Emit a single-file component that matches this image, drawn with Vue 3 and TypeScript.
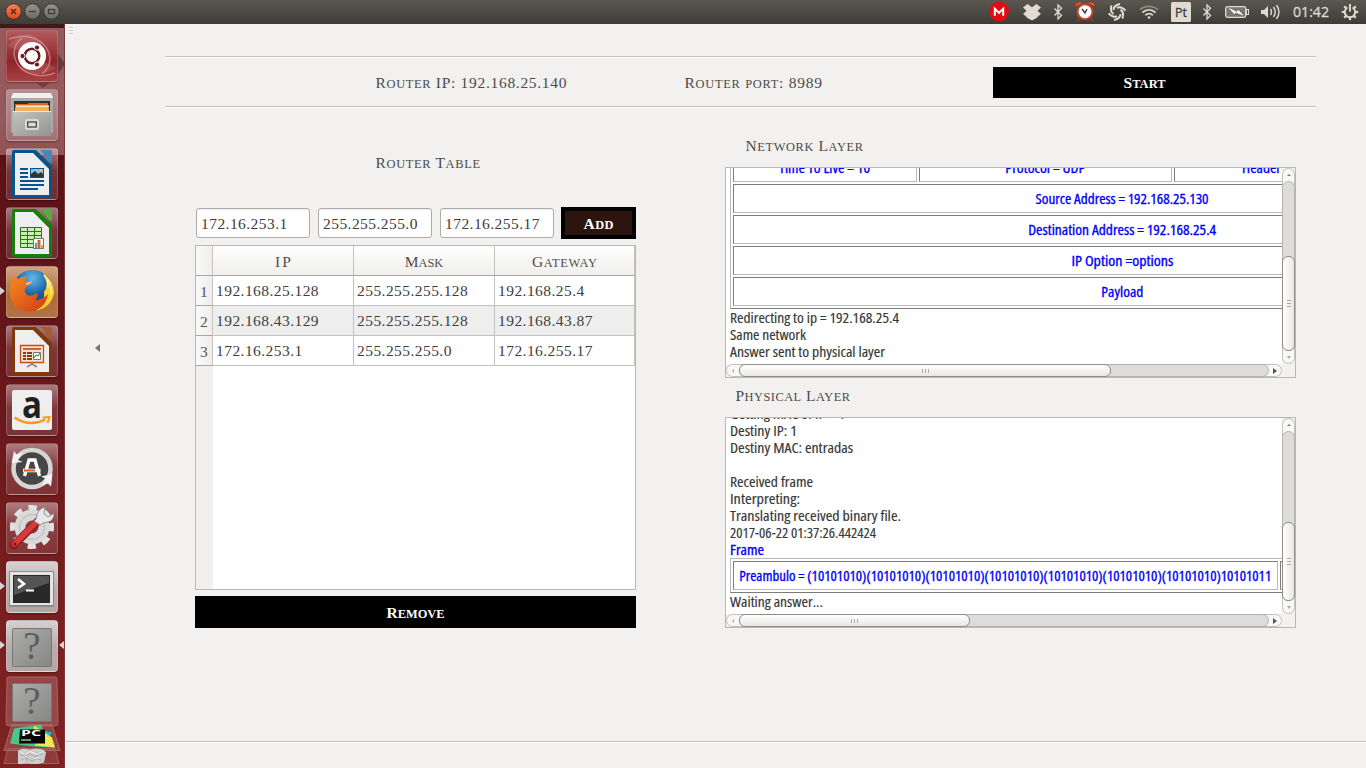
<script setup lang="ts">
import { h, ref } from 'vue'

interface Route { ip: string; mask: string; gateway: string }

const routes = ref<Route[]>([
  { ip: '192.168.25.128', mask: '255.255.255.128', gateway: '192.168.25.4' },
  { ip: '192.168.43.129', mask: '255.255.255.128', gateway: '192.168.43.87' },
  { ip: '172.16.253.1', mask: '255.255.255.0', gateway: '172.16.255.17' },
])
const draft = ref<Route>({ ip: '172.16.253.1', mask: '255.255.255.0', gateway: '172.16.255.17' })

function addRoute() {
  routes.value.push({ ...draft.value })
}
function removeRoute() {
  routes.value.pop()
}

type Line = [text: string, width: number]
const packetRows: Line[] = [
  ['Source Address = 192.168.25.130', 173],
  ['Destination Address = 192.168.25.4', 188],
  ['IP Option =options', 102],
  ['Payload', 42],
]
const networkLog: Line[] = [
  ['Redirecting to ip = 192.168.25.4', 169],
  ['Same network', 76],
  ['Answer sent to physical layer', 155],
]
const physicalLog: Line[] = [
  ['Getting MAC of IP = 1', 115],
  ['Destiny IP: 1', 67],
  ['Destiny MAC: entradas', 123],
  ['', 0],
  ['Received frame', 83],
  ['Interpreting:', 70],
  ['Translating received binary file.', 171],
  ['2017-06-22 01:37:26.442424', 146],
]

// Sets lowercase runs as large small capitals.
const Caps = (props: { text: string }) =>
  h('span', { class: 'caps' }, props.text.split(/([a-z]+)/).filter(Boolean).map((run) =>
    /^[a-z]/.test(run) ? h('small', run) : run))
Caps.props = ['text']

// Condenses a run of text to the given width in pixels.
const vCondense = {
  mounted(el: HTMLElement, binding: { value: number }) {
    const w = el.getBoundingClientRect().width
    if (w > 0 && binding.value > 0) el.style.transform = `scaleX(${binding.value / w})`
  },
}
// Tracks a run of text out to the given width in pixels.
const vTrack = {
  mounted(el: HTMLElement, binding: { value: number }) {
    const w = el.getBoundingClientRect().width
    const n = (el.textContent ?? '').length
    if (n > 1) {
      el.style.letterSpacing = `${(binding.value - w) / (n - 1)}px`
      el.style.marginRight = `${-(binding.value - w) / (n - 1)}px`
    }
  },
}
</script>

<template>
  <div class="screen">
    <header class="topbar">
      <svg width="66" height="24" viewBox="0 0 66 24">
        <defs>
          <linearGradient id="wc" x1="0" y1="0" x2="0" y2="1"><stop offset="0" stop-color="#fb8157" /><stop offset="1" stop-color="#dc4a1c" /></linearGradient>
          <linearGradient id="wg" x1="0" y1="0" x2="0" y2="1"><stop offset="0" stop-color="#96948b" /><stop offset="1" stop-color="#6b6963" /></linearGradient>
        </defs>
        <circle cx="13.500" cy="11.500" r="7.800" fill="url(#wc)" stroke="#34332e" />
        <circle cx="32.500" cy="11.500" r="7.800" fill="url(#wg)" stroke="#34332e" />
        <circle cx="51.500" cy="11.500" r="7.800" fill="url(#wg)" stroke="#34332e" />
        <path d="M11 9l5 5M16 9l-5 5" stroke="#5a2a17" stroke-width="1.500" />
        <path d="M29 11.500h7" stroke="#3c3b36" stroke-width="1.300" />
        <rect x="48.500" y="9.500" width="6" height="4" fill="none" stroke="#3c3b36" stroke-width="1.300" />
      </svg>
      <svg class="tray" width="396" height="24" viewBox="0 0 396 24">
        <circle cx="29" cy="11.600" r="10" fill="#e30b12" />
        <path d="M24.800 15.700V8.800l4.200 4 4.200-4v6.900" fill="none" stroke="#fff" stroke-width="2" />
        <path d="M57.500 4l4.500 3.200 4.500-3.200 4.500 3.500-3.500 3.300 3.500 3.300-3.500 2.700v.7l-5.500 3-5.500-3v-.7l-3.500-2.700 3.500-3.300-3.500-3.300z" fill="#dfdbd2" />
        <g fill="none" stroke="#dfdbd2" stroke-width="1.300">
          <path d="M84.500 8.500l7 7-3.500 3.500v-14l3.500 3.200-7 7.300" />
          <path d="M233.500 8.500l7 7-3.500 3.500v-14l3.500 3.200-7 7.300" />
        </g>
        <path d="M107 21l3-4M123 21l-3-4" stroke="#8c3520" stroke-width="3" />
        <path d="M105 7c-1-4 4-7 8-4zM125 7c1-4-4-7-8-4z" fill="#d8584a" stroke="#762f22" stroke-width=".7" />
        <circle cx="115" cy="11.700" r="7.500" fill="#fff" stroke="#bd462e" stroke-width="2" />
        <path d="M112 9l3 4 2-4" fill="none" stroke="#333" stroke-width="1.400" />
        <g fill="none" stroke="#dfdbd2" stroke-width="2">
          <path v-for="a in 6" :key="a" d="M143.500 10q0-4.500 6.500-6" :transform="`rotate(${a * 60} 147 12)`" />
        </g>
        <g fill="none" stroke="#dfdbd2" stroke-width="1.800">
          <path d="M170 9.700c5-4.500 13-4.500 18 0" stroke="#8f8c84" />
          <path d="M172.500 12.500c4-3.500 9-3.500 13 0" />
          <path d="M175.300 15.300c2.500-2.200 5-2.200 7.500 0" />
        </g>
        <circle cx="179" cy="17.500" r="1.300" fill="#dfdbd2" />
        <rect x="201" y="2" width="20" height="20" rx="1.500" fill="#dfdbd2" />
        <text x="205" y="17" font-size="13.500" fill="#3c3b37" stroke="#3c3b37" stroke-width=".3" textLength="12" lengthAdjust="spacingAndGlyphs">Pt</text>
        <rect x="255.700" y="6.700" width="20" height="10.600" rx="1.500" fill="#77756e" stroke="#dfdbd2" stroke-width="1.300" />
        <rect x="276.500" y="9.500" width="2" height="5" fill="none" stroke="#dfdbd2" />
        <path d="M259.500 8.500l8 4 .5-2.500 5 5-8-3-.5 2z" fill="#fff" stroke="#fff" stroke-width=".6" />
        <path d="M291 10h3l4-4v12l-4-4h-3z" fill="#dfdbd2" />
        <path d="M300.500 9q2 3 0 6M303.500 7q3.500 5 0 10M306.500 5q5 7 0 14" fill="none" stroke="#dfdbd2" stroke-width="1.400" />
        <text x="323" y="17" font-size="14.500" fill="#dfdbd2" stroke="#dfdbd2" stroke-width=".3" textLength="36" lengthAdjust="spacingAndGlyphs">01:42</text>
        <g fill="none" stroke="#dfdbd2">
          <path d="M377.500 7.500a5.200 5.200 0 1 0 5 0M380 4v7.500" stroke-width="1.900" />
          <path v-for="a in [45, 90, 135, 180, 225, 270, 315]" :key="a" d="M380 6.500v-2.700" stroke-width="2.200" :transform="`rotate(${a} 380 12)`" />
        </g>
      </svg>
    </header>

    <div class="desktop">
      <nav class="launcher">
        <div class="tile dash">
          <svg viewBox="0 0 52 52">
            <path d="M2 16Q20-6 37 13L26 26zM50 38Q28 50 13 39L26 26z" fill="#e2aaaa" opacity=".2" />
            <g fill="none" stroke="#eab9b9" opacity=".5" stroke-width="1.500">
              <path d="M3 9C22 2 42 10 44 28Q44 38 36 44M49 43C30 50 10 42 8 24Q8 14 16 8" />
            </g>
            <circle cx="26" cy="26" r="14" fill="#fff" />
            <circle cx="26" cy="26" r="7.300" fill="none" stroke="#681a1d" stroke-width="2.500" />
            <g fill="#681a1d" stroke="#fff" stroke-width="1"><circle cx="16.500" cy="26" r="2.600" /><circle cx="31" cy="17.500" r="2.600" /><circle cx="31" cy="34.500" r="2.600" /></g>
          </svg>
          <i class="dash-arrow"></i><i class="dash-notch"></i>
        </div>
        <div class="tile pale">
          <svg viewBox="0 0 52 52">
            <defs><linearGradient id="cab" x1="0" y1="0" x2="1" y2="1"><stop offset="0" stop-color="#c4c4c2" /><stop offset="1" stop-color="#939391" /></linearGradient></defs>
            <path d="M5 9l2-5h38l2 5v35H5z" fill="#aaa" /><path d="M7 4h38l2 5H5z" fill="#efefed" />
            <rect x="8" y="12" width="36" height="12" fill="#303030" />
            <path d="M9 22v-7h12l2-1h19v8z" fill="#db6c20" /><rect x="10" y="16.500" width="33" height="2" fill="#fff1d0" /><rect x="9" y="19" width="34" height="3" fill="#f5ae59" />
            <path d="M7 22h38v25H7z" fill="url(#cab)" /><path d="M7 22.500h38" stroke="#eee" />
            <rect x="19" y="30" width="14" height="11" rx="2" fill="#d8d8d6" /><rect x="21.700" y="33" width="8.600" height="5" fill="#ddd" stroke="#444" stroke-width="1.300" />
          </svg>
        </div>
        <div class="tile">
          <svg viewBox="0 0 52 52">
            <path d="M8 2h22l16 16v30q0 2-2 2H8q-2 0-2-2V4q0-2 2-2z" fill="#07548c" /><path d="M9 5h18l16 16v26H9z" fill="#eee" /><path d="M34 2h10q2 0 2 2v11q-4 0-6-5t-6-8z" fill="#4389ba" />
            <g fill="#07548c"><rect x="14" y="20" width="8" height="2" /><rect x="14" y="24" width="8" height="2" /><rect x="14" y="28" width="8" height="2" /><rect x="14" y="32" width="24" height="2" /><rect x="14" y="36" width="24" height="2" /><rect x="14" y="40" width="18" height="2" /></g>
            <rect x="24.500" y="20.500" width="13" height="9" fill="#81c3ee" stroke="#07548c" /><path d="M25 29v-3l4-3 3 3 3-2 2 2v3z" fill="#333" /><circle cx="35" cy="22.500" r="1.500" fill="#f5cd35" />
          </svg>
        </div>
        <div class="tile">
          <svg viewBox="0 0 52 52">
            <path d="M8 2h22l16 16v30q0 2-2 2H8q-2 0-2-2V4q0-2 2-2z" fill="#187e0d" /><path d="M9 5h18l16 16v26H9z" fill="#eee" /><path d="M34 2h10q2 0 2 2v10q-4 0-6-5t-6-7z" fill="#53ac3e" />
            <path d="M14.500 20.500h21v20h-21z" fill="#c7f0b7" /><path d="M14.500 20.500h21v20h-21zM21.500 20v20M28.500 20v20M14 24.500h22M14 28.500h22M14 32.500h22M14 36.500h22" fill="none" stroke="#187e0d" />
            <rect x="27.500" y="31.500" width="10" height="10" fill="#fff" stroke="#777" /><path d="M29 36h2v5h-2z" fill="#3ea4d9" /><path d="M31.500 33h3v8h-3z" fill="#d46522" /><path d="M35 38h2v3h-2z" fill="#efa415" />
          </svg>
        </div>
        <div class="tile firefox">
          <svg viewBox="0 0 52 52">
            <defs><radialGradient id="glb" cx=".5" cy=".2" r=".8"><stop offset="0" stop-color="#62bae4" /><stop offset=".5" stop-color="#1c62a4" /><stop offset="1" stop-color="#123773" /></radialGradient>
              <linearGradient id="fox" x1="0" y1="0" x2="1" y2="1"><stop offset="0" stop-color="#f58b22" /><stop offset="1" stop-color="#d33b12" /></linearGradient></defs>
            <circle cx="26.500" cy="24.500" r="20.500" fill="url(#glb)" />
            <path d="M37 7q11 8 11 20Q45 42 29 45q11-8 9-19Q44 18 37 7z" fill="#f8d12e" />
            <path d="M38 9q5 7 4 13M42 13q4 7 3 15" stroke="#fff19a" stroke-width="1.500" fill="none" />
            <path d="M8 9l4 4q4-3 9-2l-2 5h6q0 3-5 5-3 4 1 8 5 2 10-2 2 3-2 7 8 0 13-6-1 9-8 14-9 6-19 2Q4 39 4 26 4 17 8 9z" fill="url(#fox)" />
            <path d="M20 17l6-2q0 3-6 4z" fill="#e9b8a2" />
          </svg>
        </div>
        <div class="tile">
          <svg viewBox="0 0 52 52">
            <path d="M8 2h22l16 16v30q0 2-2 2H8q-2 0-2-2V4q0-2 2-2z" fill="#81380c" /><path d="M9 5h18l16 16v26H9z" fill="#eee" /><path d="M34 2h10q2 0 2 2v10q-4 0-6-5t-6-7z" fill="#a65b31" />
            <path d="M14.500 20.500h23v17h-23z" fill="#f7e3d5" stroke="#c44f14" stroke-width="1.300" /><path d="M17 24h18" stroke="#d2642b" stroke-width="2" /><path d="M17 28h3M17 31h3M17 34h3M21 28h5M21 31h5M21 34h5" stroke="#8b3a0d" stroke-width="2" /><path d="M27.500 27.500h7v7h-7z" fill="#fff" stroke="#777" /><path d="M28 33l2-3 2 1 2-3" stroke="#188a20" fill="none" /><path d="M26 38v2M26 39l-5 3M26 39l5 3" stroke="#888" stroke-width="1.500" />
          </svg>
        </div>
        <div class="tile">
          <svg viewBox="0 0 52 52">
            <rect x="6" y="6" width="40" height="40" rx="2" fill="#eee" />
            <text class="amazon" x="16" y="34" font-size="37" font-weight="700" textLength="20" lengthAdjust="spacingAndGlyphs">a</text>
            <path d="M8.500 33.500q15 10 31 2" fill="none" stroke="#f79918" stroke-width="2.500" /><path d="M36.500 33.500l7-.5-2 6" fill="none" stroke="#f79918" stroke-width="2" />
          </svg>
        </div>
        <div class="tile">
          <svg viewBox="0 0 52 52">
            <circle cx="26" cy="25.500" r="18.500" fill="#464646" stroke="#d5d5d5" stroke-width="4.500" />
            <path d="M5.500 20L8 8l2.500 3.500 5.500-1.500-4 7 5 2z" fill="#f2f2f2" /><path d="M46.500 31l-1.500 12.500-3-3-6 2 3.500-7-4.500-2z" fill="#f2f2f2" />
            <path d="M18.500 33L23 17h6l4.500 16M17 27.500h17.500" fill="none" stroke="#fff" stroke-width="3.300" /><path d="M18 27.500h11" stroke="#e9531b" stroke-width="2" />
          </svg>
        </div>
        <div class="tile">
          <svg viewBox="0 0 52 52">
            <circle cx="26" cy="25" r="19" fill="none" stroke="#e2e2e2" stroke-width="6" stroke-dasharray="8 6.923" transform="rotate(-12 26 25)" />
            <circle cx="26" cy="25" r="12" fill="none" stroke="#d9d9d9" stroke-width="11" />
            <circle cx="26" cy="25" r="12.500" fill="none" stroke="#b9b9b9" />
            <path d="M8 43l23-23" stroke="#8f1515" stroke-width="8" stroke-linecap="round" /><path d="M8.500 42L30 20.500" stroke="#d53b3b" stroke-width="6" stroke-linecap="round" />
            <path d="M28 19q3-2 3-6 1-6 8-8l-1 7 4 3 6-4q0 8-6 9-5 0-8 3z" fill="#e8e8e8" stroke="#777" stroke-width=".7" /><circle cx="9" cy="42" r="1.500" fill="#6b1111" />
          </svg>
        </div>
        <div class="tile light">
          <svg viewBox="0 0 52 52">
            <rect x="3" y="10" width="45" height="36" rx="1" fill="#8a8a89" /><rect x="4" y="11" width="43" height="33" fill="#e4e4e3" /><rect x="7" y="14" width="37" height="28" fill="#292929" /><path d="M8 15h35v7L8 34z" fill="#545454" />
            <path d="M12 18l6 5-6 4" fill="none" stroke="#fff" stroke-width="2.500" /><path d="M20 29.500h8" stroke="#fff" stroke-width="2" />
          </svg>
        </div>
        <div class="tile light">
          <svg viewBox="0 0 52 52">
            <defs><linearGradient id="unk" x1="0" y1="0" x2="1" y2="1"><stop offset="0" stop-color="#adadac" /><stop offset="1" stop-color="#868685" /></linearGradient></defs>
            <rect x="6.500" y="8.500" width="39" height="38" rx="1" fill="url(#unk)" stroke="#777" /><text class="question" x="26" y="39" font-size="39" text-anchor="middle">?</text>
          </svg>
          <i class="focus"></i>
        </div>
        <svg class="stack" width="65" height="91" viewBox="0 0 65 91">
          <path d="M7 5q0-1 2-1h46q2 0 2 2l1 44q0 3-3 3H9q-3 0-3-3z" fill="#c29191" fill-opacity=".35" stroke="#b77676" stroke-opacity=".7" />
          <rect x="12.500" y="10.500" width="39" height="38" rx="1" fill="url(#unk)" stroke="#777" /><text class="question" x="32" y="41" font-size="39" text-anchor="middle">?</text>
          <g transform="translate(0 1.500)">
            <path d="M12 50h40l8 26H4z" fill="#b77777" fill-opacity=".4" stroke="#ac6565" />
            <path d="M14 54l27-4 3 7 6 7 5 9-21-1-24-3z" fill="#45c98a" /><path d="M42 56l10 2-3 5z" fill="#18b8d7" /><path d="M34 51l18 12 3 10-20-2z" fill="#eee94c" />
            <path d="M20 55h25v14H19z" fill="#050505" /><text class="pc" x="21" y="61.500" font-size="8" textLength="20" lengthAdjust="spacingAndGlyphs">PC</text><path d="M21 65.500h10" stroke="#fff" />
            <path d="M8 74h47l4 15H4z" fill="#b77777" fill-opacity=".3" stroke="#a65d5d" />
            <path d="M18 76l5-2 7 1 6-1 7 1 3 3-2 10-8 2-9-1-9 1z" fill="#cdcdcb" /><path d="M20 80l5 2 5-3 5 3 8-3M21 85l6-2 4 4 6-3 5 2M24 78l3 9M38 78l-5 9" fill="none" stroke="#a8a8a6" /><path d="M20 77l5 3 5-3 7 3 6-3M23 83l4-1M34 84l5-1" fill="none" stroke="#f0f0ee" />
          </g>
        </svg>
        <i class="run r1"></i><i class="run r2"></i><i class="run r3"></i>
      </nav>

      <main class="window">
        <div class="side">
          <div class="grip"><i></i><i></i><i></i></div>
          <i class="collapse"></i>
        </div>
        <div class="content">
          <section class="status">
            <div class="label router-ip"><Caps v-track="191" text="Router IP: 192.168.25.140" /></div>
            <div class="label router-port"><Caps v-track="137.5" text="Router port: 8989" /></div>
            <button class="btn start"><Caps v-track="42" text="Start" /></button>
          </section>
          <div class="columns">
            <section class="routing">
              <h2 class="label table-title"><Caps v-track="104.5" text="Router Table" /></h2>
              <div class="form">
                <input v-model="draft.ip"><input v-model="draft.mask"><input v-model="draft.gateway">
                <button class="btn add" @click="addRoute"><Caps v-track="30" text="Add" /></button>
              </div>
              <div class="grid">
                <div class="row head"><b></b><span><Caps v-track="16" text="IP" /></span><span><Caps v-track="38.5" text="Mask" /></span><span><Caps v-track="65" text="Gateway" /></span></div>
                <div v-for="(r, i) in routes" :key="i" class="row" :class="{ alt: i % 2 === 1 }">
                  <b>{{ i + 1 }}</b><span>{{ r.ip }}</span><span>{{ r.mask }}</span><span>{{ r.gateway }}</span>
                </div>
                <div class="rest"></div>
              </div>
              <button class="btn remove" @click="removeRoute"><Caps v-track="58" text="Remove" /></button>
            </section>

            <section class="layers">
              <h2 class="label net-title"><Caps v-track="117.5" text="Network Layer" /></h2>
              <div class="pane">
                <div class="view">
                  <div class="packet">
                    <div class="fields">
                      <div class="cell ttl"><span v-condense="91">Time To Live = 10</span></div>
                      <div class="cell proto"><span v-condense="80">Protocol = UDP</span></div>
                      <div class="cell hdr"><span class="from-left" v-condense="39">Header</span></div>
                    </div>
                    <div v-for="[t, w] in packetRows" :key="t" class="cell"><span v-condense="w">{{ t }}</span></div>
                  </div>
                  <p v-for="[t, w] in networkLog" :key="t"><span v-condense="w">{{ t }}</span></p>
                </div>
                <div class="vbar"><i class="up"></i><div class="trough"><div class="thumb net"><u></u><u></u><u></u></div></div><i class="down"></i></div>
                <div class="hbar"><i class="left"></i><div class="trough"><div class="thumb net"><u></u><u></u><u></u></div></div><i class="right"></i></div>
              </div>
              <h2 class="label phy-title"><Caps v-track="114.5" text="Physical Layer" /></h2>
              <div class="pane">
                <div class="view">
                  <p v-for="([t, w], i) in physicalLog" :key="i"><span v-condense="w">{{ t }}</span></p>
                  <p class="frame"><span v-condense="34">Frame</span></p>
                  <div class="packet strip">
                    <div class="cell preamble"><span v-condense="532">Preambulo = (10101010)(10101010)(10101010)(10101010)(10101010)(10101010)(10101010)10101011</span></div>
                    <div class="cell next"></div>
                  </div>
                  <p><span v-condense="93">Waiting answer...</span></p>
                </div>
                <div class="vbar"><i class="up"></i><div class="trough"><div class="thumb phy"><u></u><u></u><u></u></div></div><i class="down"></i></div>
                <div class="hbar"><i class="left"></i><div class="trough"><div class="thumb phy"><u></u><u></u><u></u></div></div><i class="right"></i></div>
              </div>
            </section>
          </div>
        </div>
      </main>
    </div>
  </div>
</template>

<style>
body { margin: 0; overflow: hidden; }
.caps { display: inline-block; }
.caps small { font-size: 12.4px; text-transform: uppercase; }
</style>

<style scoped>
* { box-sizing: border-box; }
.screen { width: 1366px; height: 768px; display: flex; flex-direction: column; background: #f2f1ef; overflow: hidden; font-family: "Open Sans", "Noto Sans", sans-serif; }
.topbar { height: 24px; flex: none; display: flex; justify-content: space-between; background: linear-gradient(#5a584e, #3d3c38); }
.desktop { flex: 1; display: flex; min-height: 0; }

.launcher { position: relative; width: 65px; flex: none; padding: 6px 0 0; display: flex; flex-direction: column; gap: 7px; border-right: 1px solid #7d3a3d; background: linear-gradient(#40191b 0 4px, #965a5d 4px 100px, #8f5154 131px, #5b1217 131px, #6b181c 400px, #7b2020 600px, #7d2121); }
.tile { position: relative; flex: none; width: 52px; height: 52px; margin-left: 6px; border-radius: 4px; border: 1px solid #ffffff30; background: linear-gradient(#ffffff70, #ffffff26 45%, #ffffff1c); box-shadow: 0 1px 2px #0005; }
.tile svg { display: block; width: 52px; height: 52px; margin: -1px; }
.dash { background: linear-gradient(#b35a5c, #8f2428 60%, #a84043); }
.firefox { background: linear-gradient(#cfa183, #b06a3b 60%, #b27245); }
.light { background: linear-gradient(#d6d1d1, #b9aeae 50%, #b5a5a5); }
.pale { background: linear-gradient(#ffffff50, #ffffff28); }
.dash-arrow, .dash-notch, .focus, .run { position: absolute; width: 0; height: 0; }
.dash-arrow { left: 51px; top: 23px; border: 10px solid transparent; border-left: 7px solid #683a3d; border-right: 0; }
.dash-notch { left: 28px; top: 51px; border: 8px solid transparent; border-top: 6px solid #6d3f41; border-bottom: 0; }
.focus { left: 52px; top: 20px; border: 4px solid transparent; border-right: 5px solid #d9d3d3; border-left: 0; }
.run { left: 0; border: 4px solid transparent; border-left: 5px solid #d9d3d3; border-right: 0; }
.r1 { top: 263px; } .r2 { top: 558px; } .r3 { top: 617px; }
.stack { flex: none; margin-top: -6px; }
.amazon { fill: #202020; font-family: "Open Sans", sans-serif; }
.question { fill: #5e5e5d; font-family: "Liberation Serif", serif; }
.pc { fill: #fff; font-weight: 700; }

.window { flex: 1; display: flex; background: linear-gradient(#c3c2bf, #c3c2bf) 0 717px / 100% 1px no-repeat, linear-gradient(#fff, #fff) 0 718px / 100% 1px no-repeat, #f2f1ef; }
.side { width: 100px; padding: 3px 0 0 4px; display: flex; flex-direction: column; }
.grip { height: 8px; display: flex; flex-direction: column; gap: 2px; }
.grip i { width: 4px; height: 1px; background: #c7c6c3; box-shadow: 0 1px #fff; }
.collapse { margin: 309px 0 0 26px; width: 0; height: 0; border: 4px solid transparent; border-right: 5px solid #747474; border-left: 0; }
.content { width: 1151px; padding-top: 32px; }
.label, .btn, .grid, input { font-family: "Liberation Serif", "Times New Roman", serif; font-size: 15.5px; color: #4a4a4a; font-weight: 400; white-space: nowrap; }
.label { margin: 0; height: 20px; line-height: 20px; }
.status { height: 51px; padding-top: 1px; display: flex; align-items: center; border-top: 1px solid #c3c2bf; border-bottom: 1px solid #c3c2bf; box-shadow: 0 1px #fff, inset 0 1px #fff; }
.status .label { margin-top: 2px; }
.router-ip { width: 309px; margin-left: 210.5px; }
.router-port { width: 308.5px; }
.btn { background: #000; border: 0; padding: 1px 0 0; color: #fff; font-weight: 700; display: flex; align-items: center; justify-content: center; }
.start { width: 303px; height: 31px; margin-top: 1px; }
.columns { display: flex; padding-left: 30px; gap: 89px; }
.routing { width: 441px; padding-top: 46px; }
.table-title { margin-left: 180.5px; }
.form { display: flex; align-items: center; height: 32px; margin: 34px 0 6px 1px; }
input { width: 114px; height: 30px; margin-right: 8px; padding: 2px 4px 0; border: 1px solid #aeaba6; border-radius: 3px; background: #fff; color: #3c3c3c; letter-spacing: .44px; outline: 0; box-shadow: inset 0 1px 1px #0001; }
.add { width: 75px; height: 32px; margin-left: -1px; background: #2b150e; border: 4px solid #000; padding-top: 2px; }
.grid { height: 345px; display: flex; flex-direction: column; border: 1px solid #bbb8b4; background: #fff; color: #3e3e3e; }
.row { display: grid; grid-template: 30px / 17px 141px 141px 140px; height: 30px; flex: none; line-height: 30px; letter-spacing: .44px; }
.row > * { height: 30px; }
.row > span { padding-left: 3px; border-right: 1px solid #c4c2bf; border-bottom: 1px solid #c4c2bf; }
.row > b { font-weight: 400; text-align: center; line-height: 32px; border-right: 1px solid #c8c5c1; border-bottom: 1px solid #aaa39f; background: linear-gradient(90deg, #fafafa, #efeeed); color: #555; }
.row.alt > span { background: #eee; }
.row.head > span { padding: 0; line-height: 32px; text-align: center; background: linear-gradient(#fff, #f0efed); border-bottom-color: #aaa39f; color: #4d4d4d; letter-spacing: 0; }
.rest { flex: 1; width: 17px; background: #f1f0ee; }
.remove { width: 441px; height: 32px; margin-top: 6px; padding-top: 2px; }
.layers { width: 571px; padding-top: 29px; }
.net-title { margin: 0 0 11px 20.5px; }
.phy-title { margin: 8px 0 11px 10.5px; }

.pane { width: 571px; height: 211px; border: 1px solid #bbb8b4; display: grid; grid-template: 196px 13px / 556px 13px; background: #f2f1ef; }
.view { background: #fff; overflow: hidden; display: flex; flex-direction: column; justify-content: flex-end; padding: 0 0 4px 4px; font-size: 14.2px; font-stretch: 75%; line-height: 17px; color: #383838; -webkit-text-stroke: .15px; white-space: nowrap; }
.view p { margin: 0; height: 17px; flex: none; }
.view span { display: inline-block; }
.view p span, .from-left { transform-origin: 0 50%; }
.view .frame, .packet { color: #0000fa; -webkit-text-stroke: .3px; }
.packet { flex: none; width: 785px; padding: 2px; display: flex; flex-direction: column; gap: 2px; border: 1px solid #b9b9b9; border-bottom-color: #7c7c7c; border-right-color: #7c7c7c; }
.fields { display: flex; gap: 2px; }
.cell { height: 29px; flex: none; display: flex; align-items: center; justify-content: center; border: 1px solid; border-color: #7c7c7c #b9b9b9 #b9b9b9 #7c7c7c; }
.ttl { width: 184px; } .proto { width: 253px; }
.hdr { width: 338px; justify-content: flex-start; padding-left: 67px; }
.strip { flex-direction: row; width: 1400px; }
.preamble { width: 545px; } .next { flex: 1; }

.vbar { display: flex; flex-direction: column; border: 1px solid #c2c0bd; border-radius: 7px; background: #f8f8f7; }
.hbar { display: flex; border: 1px solid #c2c0bd; border-radius: 7px; background: #f8f8f7; }
.vbar i, .hbar i { flex: none; width: 11px; height: 12px; display: grid; place-items: center; }
.hbar i { height: 11px; width: 12px; }
.vbar i::after, .hbar i::after { content: ""; width: 0; height: 0; border: 2px solid transparent; }
.up::after { border-bottom: 2px solid #777 !important; border-top: 0 !important; }
.down::after { border-top: 3px solid #aaa !important; border-bottom: 0 !important; }
.left::after { border-right: 2px solid #aaa !important; border-left: 0 !important; }
.right::after { border-left: 4px solid #555 !important; border-right: 0 !important; border-top-width: 3px !important; border-bottom-width: 3px !important; }
.trough { flex: 1; display: flex; border: 1px solid #b6b4b1; background: #dddcda; border-radius: 7px; margin: 0 -1px; }
.hbar .trough { margin: -1px 0; }
.thumb { display: flex; align-items: center; justify-content: center; gap: 2px; border: 1px solid #8f8d8a; border-radius: 6px; background: linear-gradient(90deg, #fff, #e8e7e5); }
.vbar .trough { flex-direction: column; justify-content: flex-end; }
.vbar .thumb { flex-direction: column; gap: 2px; margin: 0 -1px -1px; }
.vbar .thumb u { width: 4px; height: 1px; background: #aaa; }
.hbar .thumb { margin: -1px 0 -1px -1px; background: linear-gradient(#fff, #e8e7e5); }
.hbar .thumb u { width: 1px; height: 4px; background: #aaa; }
.vbar .net { height: 95px; } .vbar .phy { height: 79px; }
.hbar .net { width: 372px; } .hbar .phy { width: 231px; }
</style>
